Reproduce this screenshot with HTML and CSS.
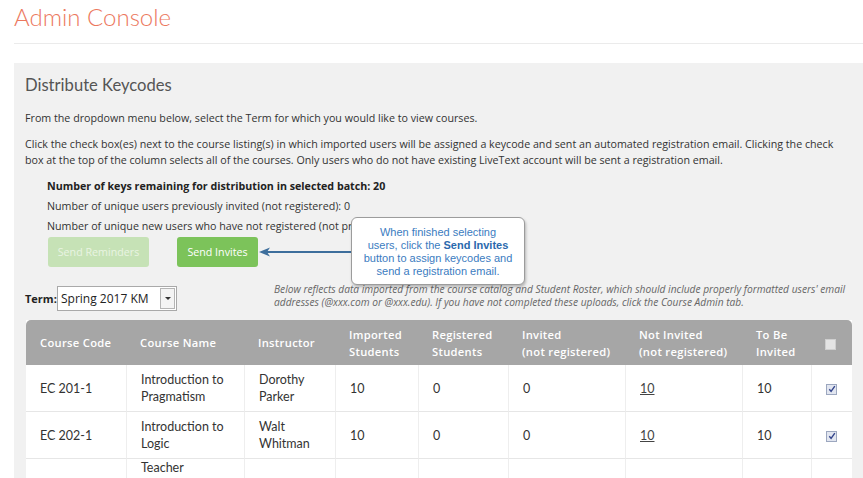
FILE: index.html
```html
<!DOCTYPE html>
<html lang="en">
<head>
  <meta charset="UTF-8">
  <meta name="viewport" content="width=device-width, initial-scale=1.0">
  <title>Admin Console</title>
  <link rel="stylesheet" href="styles.css">
</head>
<body>
  <div class="page">
    <header class="page-header">
      <h1>Admin Console</h1>
    </header>

    <div class="panel">
      <h2>Distribute Keycodes</h2>
      <p>From the dropdown menu below, select the Term for which you would like to view courses.</p>
      <p>Click the check box(es) next to the course listing(s) in which imported users will be assigned a keycode and sent an automated registration email. Clicking the check box at the top of the column selects all of the courses. Only users who do not have existing LiveText account will be sent a registration email.</p>

      <!-- Batch counts -->
      <div class="stats">
        <p class="stats-main">Number of keys remaining for distribution in selected batch: 20</p>
        <p>Number of unique users previously invited (not registered): 0</p>
        <p>Number of unique new users who have not registered (not previously invited): 0</p>
      </div>

      <div class="actions">
        <button type="button" class="btn btn-muted" disabled>Send Reminders</button>
        <button type="button" class="btn btn-go">Send Invites</button>
      </div>

      <!-- Callout pointing at the invite button -->
      <svg class="pointer" width="96" height="14" viewBox="0 0 96 14">
        <line x1="6" y1="7" x2="96" y2="7" stroke="#3d6e9c" stroke-width="2"/>
        <polygon points="0,7 11,2.5 8,7 11,11.5" fill="#3d6e9c"/>
      </svg>
      <div class="callout">
        When finished selecting<br>users, click the <b>Send Invites</b><br>button to assign keycodes and<br>send a registration email.
      </div>

      <div class="term-row">
        <div class="term">
          <label class="term-label">Term:</label>
          <div class="select">
            <span class="select-value">Spring 2017 KM</span>
            <span class="select-btn"><span class="caret"></span></span>
          </div>
        </div>
        <p class="note">Below reflects data imported from the course catalog and Student Roster, which should include properly formatted users' email addresses (@xxx.com or @xxx.edu). If you have not completed these uploads, click the Course Admin tab.</p>
      </div>

      <table class="courses">
        <colgroup>
          <col style="width:100px">
          <col style="width:118px">
          <col style="width:91px">
          <col style="width:83px">
          <col style="width:90px">
          <col style="width:117px">
          <col style="width:117px">
          <col style="width:69px">
          <col style="width:41px">
        </colgroup>
        <thead>
          <tr>
            <th>Course Code</th>
            <th>Course Name</th>
            <th>Instructor</th>
            <th>Imported Students</th>
            <th>Registered Students</th>
            <th>Invited<br>(not registered)</th>
            <th>Not Invited<br>(not registered)</th>
            <th>To Be Invited</th>
            <th><span class="check"></span></th>
          </tr>
        </thead>
        <tbody>
          <tr>
            <td>EC 201-1</td>
            <td>Introduction to Pragmatism</td>
            <td>Dorothy Parker</td>
            <td>10</td>
            <td>0</td>
            <td>0</td>
            <td><a href="#">10</a></td>
            <td>10</td>
            <td><span class="check checked"><svg width="8" height="8" viewBox="0 0 8 8"><path d="M1.3 4.3 L3.1 6.4 L6.8 1.2" fill="none" stroke="#34458c" stroke-width="1.4"/></svg></span></td>
          </tr>
          <tr>
            <td>EC 202-1</td>
            <td>Introduction to Logic</td>
            <td>Walt Whitman</td>
            <td>10</td>
            <td>0</td>
            <td>0</td>
            <td><a href="#">10</a></td>
            <td>10</td>
            <td><span class="check checked"><svg width="8" height="8" viewBox="0 0 8 8"><path d="M1.3 4.3 L3.1 6.4 L6.8 1.2" fill="none" stroke="#34458c" stroke-width="1.4"/></svg></span></td>
          </tr>
          <tr>
            <td>EC 203-1</td>
            <td>Teacher Education Seminar</td>
            <td>Mark Twain</td>
            <td>10</td>
            <td>0</td>
            <td>0</td>
            <td><a href="#">10</a></td>
            <td>10</td>
            <td><span class="check checked"><svg width="8" height="8" viewBox="0 0 8 8"><path d="M1.3 4.3 L3.1 6.4 L6.8 1.2" fill="none" stroke="#34458c" stroke-width="1.4"/></svg></span></td>
          </tr>
        </tbody>
      </table>
    </div>
  </div>
</body>
</html>
```

FILE: styles.css
```css
body {
  margin: 0;
  padding: 0;
  background: #fff;
  font-family: "Open Sans", Arial, sans-serif;
  color: #333;
  overflow: hidden;
}

.page {
  padding-left: 14px;
}

.page-header {
  height: 39px;
  padding-top: 4px;
  border-bottom: 1px solid #ebebeb;
}

h1 {
  margin: 0;
  font-family: Lato, "Open Sans", sans-serif;
  font-weight: 300;
  font-size: 24px;
  line-height: 26px;
  color: #ec785e;
}

.panel {
  position: relative;
  margin-top: 19px;
  padding: 11px 0 20px 11px;
  background: #f1f1f1;
}

h2 {
  margin: 0;
  font-family: Lato, "Open Sans", sans-serif;
  font-weight: 400;
  font-size: 16.6px;
  line-height: 22px;
  color: #555;
}

.panel p {
  margin: 0;
  font-size: 10.7px;
  line-height: 16px;
  color: #333;
  padding-right: 10px;
}

.panel h2 + p {
  margin-top: 14px;
}

.panel p + p {
  margin-top: 10px;
}

.stats {
  margin-top: 8px;
  padding-left: 22px;
}

.stats p,
.stats p + p {
  margin: 0;
  line-height: 20px;
}

.stats .stats-main {
  font-weight: 700;
  color: #222;
}

.actions {
  display: flex;
  gap: 28px;
  margin-top: 1px;
  padding-left: 23px;
}

.btn {
  height: 30px;
  padding: 0;
  border: none;
  border-radius: 3px;
  font-family: "Open Sans", Arial, sans-serif;
  font-size: 10.7px;
  white-space: nowrap;
  color: #fff;
}

.btn-muted {
  width: 101px;
  background: #c6e2b6;
  color: #e9f4e2;
}

.btn-go {
  width: 81px;
  background: #7cc35a;
  cursor: pointer;
}

.pointer {
  position: absolute;
  left: 245px;
  top: 182px;
}

.callout {
  position: absolute;
  left: 337px;
  top: 154px;
  width: 164px;
  height: 58px;
  padding: 8px 4px 0;
  background: #fff;
  border: 1px solid #9c9c9c;
  border-radius: 6px;
  box-shadow: 1px 2px 3px rgba(0, 0, 0, 0.25);
  font-family: "Liberation Sans", Arial, sans-serif;
  font-size: 11px;
  line-height: 13px;
  white-space: nowrap;
  text-align: center;
  color: #3b7cbf;
}

.callout b {
  color: #2b69ad;
}

.term-row {
  display: flex;
  align-items: flex-start;
  margin-top: 16px;
}

.term {
  display: flex;
  flex-shrink: 0;
  align-items: center;
  width: 249px;
  margin-top: 3px;
}

.term-label {
  width: 32px;
  font-size: 11px;
  font-weight: 700;
  color: #222;
}

.select {
  display: flex;
  align-items: stretch;
  width: 118px;
  height: 23px;
  background: #fff;
  border: 1px solid #a9a9a9;
}

.select-value {
  flex: 1;
  padding-left: 3px;
  font-size: 12px;
  line-height: 23px;
  color: #222;
}

.select-btn {
  display: flex;
  align-items: center;
  justify-content: center;
  width: 13px;
  margin: 1px;
  background: #f4f4f4;
  border: 1px solid #b5b5b5;
}

.caret {
  width: 0;
  height: 0;
  border-left: 3px solid transparent;
  border-right: 3px solid transparent;
  border-top: 3px solid #333;
}

.panel .note {
  flex-shrink: 0;
  width: 585px;
  padding: 0;
  font-size: 10.2px;
  line-height: 13px;
  font-style: italic;
  color: #666;
}

.courses {
  width: 826px;
  margin-top: 9px;
  margin-left: 1px;
  table-layout: fixed;
  border-collapse: separate;
  border-spacing: 0;
  background: #fff;
}

.courses th {
  height: 45px;
  padding: 0 10px 0 14px;
  background: #a6a6a6;
  text-align: left;
  font-family: "Open Sans", Arial, sans-serif;
  font-weight: 600;
  font-size: 11.2px;
  letter-spacing: 0.3px;
  line-height: 17px;
  color: #fff;
}

.courses th:first-child {
  border-top-left-radius: 5px;
}

.courses th:last-child {
  border-top-right-radius: 5px;
}

.courses td {
  height: 46px;
  padding: 0 10px 0 14px;
  border-bottom: 1px solid #e6e6e6;
  border-left: 1px solid #eeeeee;
  font-family: Lato, "Open Sans", sans-serif;
  font-size: 12.5px;
  line-height: 17px;
  color: #333;
}

.courses td:first-child {
  border-left: none;
}

.courses td a {
  color: #444;
  text-decoration: underline;
}

.check {
  display: inline-flex;
  align-items: center;
  justify-content: center;
  width: 9px;
  height: 9px;
  border: 1px solid #cfcfcf;
  background: #e4e4e4;
  vertical-align: middle;
}

.check.checked {
  border-color: #9ca7bf;
  background: #e2e6f0;
}
```
